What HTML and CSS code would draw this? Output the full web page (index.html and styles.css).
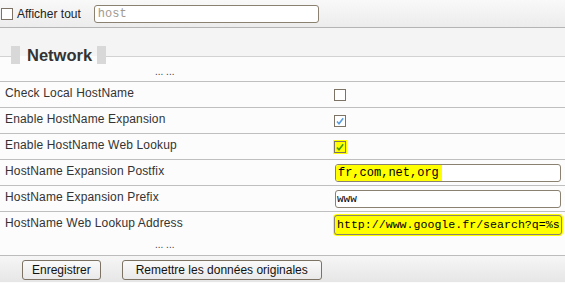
FILE: index.html
```html
<!DOCTYPE html>
<html lang="fr">
<head>
    <meta charset="UTF-8">
    <meta name="viewport" content="width=device-width, initial-scale=1.0">
    <title>Network</title>
    <link rel="stylesheet" href="styles.css">
</head>
<body>
    <div class="toolbar">
        <span class="check"></span>
        <span class="toolbar-label">Afficher tout</span>
        <input class="search" type="text" placeholder="host">
    </div>

    <div class="section-top"></div>
    <div class="legend-row">
        <span class="legend-block"></span>
        <span class="legend-text">Network</span>
        <span class="legend-block"></span>
    </div>
    <div class="dots">... ...</div>

    <div class="settings">
        <div class="row">
            <span class="label">Check Local HostName</span>
            <span class="check"></span>
        </div>
        <div class="row">
            <span class="label">Enable HostName Expansion</span>
            <span class="check checked">
                <svg viewBox="0 0 10 10" width="10" height="10"><path d="M2 5.5 L4 7.8 L8.2 2.2" fill="none" stroke="#5a9de0" stroke-width="1.6"/></svg>
            </span>
        </div>
        <div class="row">
            <span class="label">Enable HostName Web Lookup</span>
            <span class="check checked hl">
                <svg viewBox="0 0 10 10" width="10" height="10"><path d="M2 5.5 L4 7.8 L8.2 2.2" fill="none" stroke="#3f9a12" stroke-width="1.6"/></svg>
            </span>
        </div>
        <div class="row">
            <span class="label">HostName Expansion Postfix</span>
            <div class="field"><mark>fr,com,net,org</mark></div>
        </div>
        <div class="row">
            <span class="label">HostName Expansion Prefix</span>
            <div class="field small">www</div>
        </div>
        <div class="row">
            <span class="label">HostName Web Lookup Address</span>
            <div class="field hl">http://www.google.fr/search?q=%s</div>
        </div>
    </div>
    <div class="dots bottom">... ...</div>

    <div class="actions">
        <button class="btn">Enregistrer</button>
        <button class="btn wide">Remettre les données originales</button>
    </div>
</body>
</html>
```

FILE: styles.css
```css
body {
    margin: 0;
    font-family: 'Liberation Sans', Arial, sans-serif;
    font-size: 12px;
    color: #333;
    background-color: #fcfcfc;
}
.toolbar {
    display: flex;
    align-items: center;
    height: 27px;
    padding-left: 1px;
    background: linear-gradient(#f9f9f9, #ececec);
    border-bottom: 1px solid #b4b4b4;
}
.toolbar-label {
    margin-left: 4px;
    color: #222;
}
.search {
    margin-left: 13px;
    width: 225px;
    height: 18px;
    box-sizing: border-box;
    border: 1px solid #8b8170;
    border-radius: 3px;
    padding: 0 3px;
    font-family: 'Liberation Mono', monospace;
    font-size: 12px;
    background-color: white;
}
.search::placeholder {
    color: #a09a90;
}
.check {
    display: inline-flex;
    align-items: center;
    justify-content: center;
    width: 12px;
    height: 12px;
    box-sizing: border-box;
    border: 1px solid #7c7364;
    background-color: white;
}
.check.hl {
    background-color: #ffff00;
    box-shadow: 0 0 0 1px #ffff00;
}
.section-top {
    height: 18px;
    background-color: #f4f4f4;
}
.legend-row {
    display: flex;
    height: 18px;
    padding-left: 11px;
    background: linear-gradient(#f4f4f4 10px, #d2d2d2 10px, #d2d2d2 11px, #fcfcfc 11px);
}
.legend-block {
    width: 9px;
    background-color: #d8d8d8;
}
.legend-text {
    padding: 0 5px 0 7px;
    font-size: 16.5px;
    font-weight: bold;
    line-height: 18px;
    color: #333;
    background: linear-gradient(#f4f4f4 10px, #fcfcfc 10px);
}
.dots {
    height: 17px;
    padding-left: 155px;
    font-size: 10px;
    line-height: 16px;
    color: #444;
}
.dots.bottom {
    height: 18px;
    line-height: 16px;
}
.settings {
    border-top: 1px solid #bfbfbf;
}
.row {
    display: grid;
    grid-template-columns: 329px 1fr;
    align-items: center;
    height: 25px;
    padding-left: 5px;
    padding-right: 3px;
}
.row + .row {
    border-top: 1px solid #bfbfbf;
}
.label {
    line-height: 15px;
    padding-bottom: 3px;
    letter-spacing: 0.15px;
}
.field {
    height: 18px;
    box-sizing: border-box;
    margin: 0 1px;
    border: 1px solid #8b8170;
    border-radius: 3px;
    background-color: white;
    font-family: 'Liberation Mono', monospace;
    font-size: 12px;
    line-height: 16px;
    color: #000;
    white-space: nowrap;
    overflow: hidden;
}
.field mark {
    display: inline-block;
    background-color: #ffff00;
    padding: 0 3px 0 2px;
    color: #000;
}
.field.small {
    font-size: 11px;
    padding-left: 1px;
}
.field.hl {
    height: 20px;
    line-height: 18px;
    margin: 0;
    padding-left: 2px;
    font-size: 11.6px;
    background-color: #ffff00;
    box-shadow: 0 0 0 1px #ffff00;
}
.actions {
    display: flex;
    align-items: flex-start;
    gap: 21px;
    height: 27px;
    padding: 4px 0 0 22px;
    box-sizing: border-box;
    background: linear-gradient(#f6f6f6, #e6e6e6);
    border-top: 1px solid #bcbcbc;
}
.btn {
    height: 20px;
    padding: 0 9px;
    border: 1px solid #7c7364;
    border-radius: 3px;
    background: linear-gradient(#fafafa, #e9e9e9);
    font-family: 'Liberation Sans', Arial, sans-serif;
    font-size: 12px;
    color: #111;
}
.btn.wide {
    padding: 0 13px;
}
```
